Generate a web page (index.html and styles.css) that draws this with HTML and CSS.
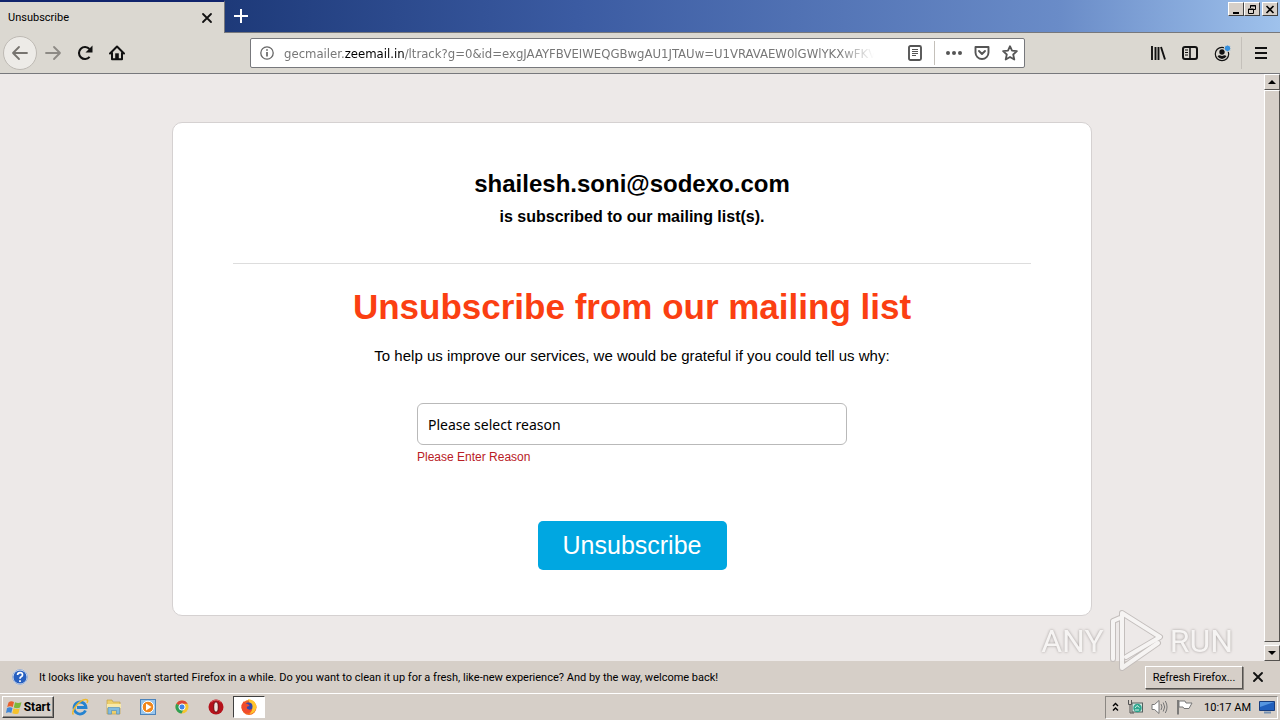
FILE: index.html
```html
<!DOCTYPE html>
<html lang="en">
<head>
    <meta charset="UTF-8">
    <meta name="viewport" content="width=device-width, initial-scale=1.0">
    <title>Unsubscribe</title>
    <link rel="stylesheet" href="styles.css">
</head>
<body>
    <header class="titlebar">
        <div class="tab">
            <span>Unsubscribe</span>
            <button class="icon-btn" aria-label="Close tab">
                <svg width="12" height="12" viewBox="0 0 12 12"><path d="M2 2l8 8M10 2l-8 8" stroke="#111" stroke-width="1.8" stroke-linecap="round"/></svg>
            </button>
        </div>
        <button class="icon-btn new-tab" aria-label="New tab">
            <svg width="14" height="14" viewBox="0 0 14 14"><path d="M7 0v14M0 7h14" stroke="#fff" stroke-width="2"/></svg>
        </button>
        <div class="window-buttons">
            <button aria-label="Minimize"><svg width="12" height="11" viewBox="0 0 12 11"><path d="M3 9h6" stroke="#000" stroke-width="2"/></svg></button>
            <button aria-label="Restore"><svg width="12" height="11" viewBox="0 0 12 11"><path d="M4.500 4V1.500h5v4H8M4 2h6M2.500 5h5v4.500h-5zM2 5.500h6" fill="none" stroke="#000"/></svg></button>
            <button class="close" aria-label="Close"><svg width="12" height="11" viewBox="0 0 12 11"><path d="M2.500 2l7 7M9.500 2l-7 7" stroke="#000" stroke-width="1.6"/></svg></button>
        </div>
    </header>

    <nav class="toolbar">
        <div class="nav-buttons">
            <button class="icon-btn back" aria-label="Back">
                <svg width="18" height="16" viewBox="0 0 18 16"><path d="M16 8H2M8 2L2 8l6 6" fill="none" stroke="#77746f" stroke-width="1.8" stroke-linecap="round" stroke-linejoin="round"/></svg>
            </button>
            <button class="icon-btn" aria-label="Forward">
                <svg width="18" height="16" viewBox="0 0 18 16"><path d="M2 8h14M10 2l6 6-6 6" fill="none" stroke="#8d8a85" stroke-width="1.8" stroke-linecap="round" stroke-linejoin="round"/></svg>
            </button>
            <button class="icon-btn" aria-label="Reload">
                <svg width="16" height="16" viewBox="0 0 16 16"><path d="M12.600 11.800A6 6 0 1 1 12.500 4" fill="none" stroke="#111" stroke-width="2.100"/><path d="M15.500 0.500v7h-7z" fill="#111"/></svg>
            </button>
            <button class="icon-btn" aria-label="Home">
                <svg width="16" height="16" viewBox="0 0 16 16"><path d="M1 8.500L8 1.500l7 7M3 8v6.200h10V8" fill="none" stroke="#111" stroke-width="2" stroke-linecap="round" stroke-linejoin="round"/><path d="M6.200 8.300h3.600v6H6.200z" fill="#111"/></svg>
            </button>
        </div>
        <div class="urlbar">
            <svg width="14" height="14" viewBox="0 0 14 14"><circle cx="7" cy="7" r="6.200" fill="none" stroke="#666" stroke-width="1.300"/><path d="M7 6v4.500M7 3.200v1.600" stroke="#666" stroke-width="1.700"/></svg>
            <div class="url">gecmailer.<b>zeemail.in</b>/ltrack?g=0&amp;id=exgJAAYFBVEIWEQGBwgAU1JTAUw=U1VRAVAEW0lGWlYKXwFKV</div>
            <button class="icon-btn" aria-label="Reader view">
                <svg width="14" height="16" viewBox="0 0 14 16"><rect x="1" y="1" width="12" height="14" rx="1.500" fill="none" stroke="#555" stroke-width="1.900"/><path d="M4 4.500h6M4 6.500h6M4 8.500h6M4 10.500h4" stroke="#555"/></svg>
            </button>
            <span class="separator"></span>
            <button class="icon-btn" aria-label="Page actions">
                <svg width="16" height="16" viewBox="0 0 16 16" fill="#555"><circle cx="2" cy="8" r="2"/><circle cx="8" cy="8" r="2"/><circle cx="14" cy="8" r="2"/></svg>
            </button>
            <button class="icon-btn" aria-label="Save to Pocket">
                <svg width="16" height="16" viewBox="0 0 16 16" fill="none" stroke="#555" stroke-width="1.900" stroke-linecap="round" stroke-linejoin="round"><path d="M1.500 2h13v5.500a6.500 6.500 0 0 1-13 0z"/><path d="M5 6l3 3 3-3"/></svg>
            </button>
            <button class="icon-btn" aria-label="Bookmark">
                <svg width="16" height="16" viewBox="0 0 16 16"><path d="M8 1.200l2 4.500 4.900.5-3.700 3.300 1.100 5L8 12l-4.300 2.500 1.100-5L1.100 6.200 6 5.700z" fill="none" stroke="#555" stroke-width="1.800" stroke-linejoin="round"/></svg>
            </button>
        </div>
        <div class="tools">
            <button class="icon-btn" aria-label="Library">
                <svg width="16" height="16" viewBox="0 0 16 16"><path d="M2 1v14M5.500 2v13M8.500 2v13M11 2l4 12.500" fill="none" stroke="#111" stroke-width="1.900"/></svg>
            </button>
            <button class="icon-btn" aria-label="Sidebars">
                <svg width="16" height="16" viewBox="0 0 16 16"><rect x="1" y="2" width="14" height="12" rx="2" fill="none" stroke="#111" stroke-width="2"/><path d="M8 2v12" stroke="#111" stroke-width="1.600"/><path d="M3 5h3M3 7.500h3M3 10h3" stroke="#111"/></svg>
            </button>
            <button class="icon-btn" aria-label="Account">
                <svg width="17" height="17" viewBox="0 0 17 17"><circle cx="8" cy="9" r="6.700" fill="none" stroke="#111" stroke-width="1.200"/><circle cx="8" cy="7" r="2.700" fill="#111"/><path d="M3.500 11.300q1.500-1.500 3-.7 1.500.8 3 0 1.500-.8 3 .7Q11 14 8 14t-4.500-2.700z" fill="#111"/><circle cx="13.500" cy="3.300" r="3.300" fill="#3590de" stroke="#dbd8d1"/></svg>
            </button>
            <span class="separator"></span>
            <button class="icon-btn" aria-label="Menu">
                <svg width="12" height="12" viewBox="0 0 12 12"><path d="M0 1h12M0 6h12M0 11h12" stroke="#111" stroke-width="2"/></svg>
            </button>
        </div>
    </nav>

    <div class="viewport">
        <main>
            <section class="card">
                <h2>shailesh.soni@sodexo.com</h2>
                <h3>is subscribed to our mailing list(s).</h3>
                <hr>
                <h1>Unsubscribe from our mailing list</h1>
                <form>
                    <label for="reason">To help us improve our services, we would be grateful if you could tell us why:</label>
                    <div class="field">
                        <select id="reason">
                            <option>Please select reason</option>
                        </select>
                        <p class="error">Please Enter Reason</p>
                    </div>
                    <button type="button" class="unsubscribe-btn">Unsubscribe</button>
                </form>
            </section>
        </main>
        <div class="scrollbar">
            <button aria-label="Scroll up"><svg width="8" height="4" viewBox="0 0 8 4"><path d="M4 0l4 4H0z"/></svg></button>
            <div class="thumb"></div>
            <button aria-label="Scroll down"><svg width="8" height="4" viewBox="0 0 8 4"><path d="M0 0h8L4 4z"/></svg></button>
        </div>
        <div class="watermark">
            <span>ANY</span>
            <svg width="56" height="64" viewBox="0 0 56 64" fill="none" stroke-linejoin="round" stroke-linecap="round">
                <g stroke="#c0bbb9" stroke-width="6"><path d="M4 50V12l7-3M13 47V4l38 24-34 20M13 47v12l36-25"/></g>
                <g stroke="#f8f6f5" stroke-width="4"><path d="M4 50V12l7-3M13 47V4l38 24-34 20M13 47v12l36-25"/></g>
            </svg>
            <span>RUN</span>
        </div>
    </div>

    <div class="notification">
        <svg width="16" height="16" viewBox="0 0 16 16"><circle cx="8" cy="8" r="7.300" fill="#2860c0" stroke="#e6eefa" stroke-width="1.400"/><circle cx="8" cy="8" r="7.500" fill="none" stroke="#6d87b4" stroke-width=".6"/><path d="M5.600 6q0-2.400 2.500-2.400T10.500 6q0 1.200-1.300 1.800Q8 8.400 8 9.800M8 11.200v1.700" fill="none" stroke="#fff" stroke-width="1.700"/></svg>
        <p>It looks like you haven't started Firefox in a while. Do you want to clean it up for a fresh, like-new experience? And by the way, welcome back!</p>
        <button class="refresh-btn"><span>R<u>e</u>fresh Firefox...</span></button>
        <button class="icon-btn" aria-label="Dismiss">
            <svg width="12" height="12" viewBox="0 0 12 12"><path d="M2 2l8 8M10 2l-8 8" stroke="#111" stroke-width="1.900" stroke-linecap="round"/></svg>
        </button>
    </div>

    <footer class="taskbar">
        <button class="start-btn">
            <svg width="16" height="15" viewBox="0 0 16 15"><path d="M2.500 2.500Q5 .5 8 2L6.800 7Q4 5.700 1.200 7z" fill="#e8602c"/><path d="M9 2.300q3 1.500 6.500 0L14 7.500q-3 1.300-6.200 0z" fill="#7db83a"/><path d="M1 8q3-1.300 5.500 0l-1.200 5Q3 11.500 0 13z" fill="#3f86d6"/><path d="M7.500 8.300q3 1.400 6.200.2l-1.300 5q-3 1.200-6.100-.2z" fill="#f6c22c"/></svg>
            Start
        </button>
        <div class="quick-launch">
            <button class="icon-btn" aria-label="Internet Explorer">
                <svg width="18" height="18" viewBox="0 0 18 18"><path d="M14.500 12.500A6 6 0 1 1 15 9.500H6" fill="none" stroke="#2583d0" stroke-width="2.800"/><path d="M2.500 16.500C-1 14 8 2 14.500 1.500c3-.2 2.300 2 1.500 3.500" fill="none" stroke="#edb92e" stroke-width="1.500"/></svg>
            </button>
            <button class="icon-btn" aria-label="Explorer">
                <svg width="18" height="18" viewBox="0 0 18 18"><path d="M2 4V2h5l1 2h7v12H2z" fill="#edcf6b" stroke="#c4a248" stroke-width=".7"/><path d="M2 6h14v4H2z" fill="#f8e9a9"/><path d="M3 16V9.500h11.500V16h-3v-3.500h-5V16z" fill="#82bce0" stroke="#5a93bc" stroke-width=".7"/></svg>
            </button>
            <button class="icon-btn" aria-label="Media Player">
                <svg width="18" height="18" viewBox="0 0 18 18"><rect x="1.500" y="1.500" width="15" height="15" fill="#9ac6ec" stroke="#4b83bb"/><circle cx="9" cy="9" r="5.800" fill="#f0871d" stroke="#fff"/><path d="M7 5.500l5.500 3.500L7 12.500z" fill="#fff"/></svg>
            </button>
            <button class="icon-btn" aria-label="Chrome">
                <svg width="18" height="18" viewBox="0 0 18 18"><circle cx="9" cy="9" r="6.500" fill="#f5c530"/><path d="M9 9L3.300 5.800A6.500 6.500 0 0 1 14.700 5.800H9z" fill="#dc4437"/><path d="M3.300 5.800A6.500 6.500 0 0 0 8.500 15.500L11 10.500 9 9z" fill="#2f9f56"/><circle cx="9" cy="9" r="3.100" fill="#4285e8" stroke="#fff"/></svg>
            </button>
            <button class="icon-btn" aria-label="Opera">
                <svg width="18" height="18" viewBox="0 0 18 18"><circle cx="9" cy="9" r="7.500" fill="#b5121b"/><path d="M4 4q5-4 10 0" fill="none" stroke="#dc6b6b"/><ellipse cx="9" cy="9" rx="2.300" ry="5.200" fill="#eee4dd" stroke="#690b10"/></svg>
            </button>
            <button class="task-active" aria-label="Firefox">
                <svg width="18" height="18" viewBox="0 0 18 18"><circle cx="9" cy="9.500" r="7.500" fill="#f26522"/><path d="M8 1q8 1 8.500 8-1 6-7 7 5-5 1-9z" fill="#ffc52e"/><circle cx="8.500" cy="8.500" r="4" fill="#3446ac"/><path d="M1.500 7L4 3l1.500 2.500Q9 6 9.500 8 6 8 7 10.500q2 2 5 .5-1.500 5-6.500 4Q1 13 1.500 7z" fill="#f04b2c"/></svg>
            </button>
        </div>
        <div class="tray">
            <svg width="7" height="10" viewBox="0 0 7 10"><path d="M1 4l2.500-2.500L6 4M1 8.500L3.500 6 6 8.500" fill="none" stroke="#000" stroke-width="1.400"/></svg>
            <svg width="16" height="16" viewBox="0 0 16 16"><rect x="5" y="4" width="10.500" height="9" fill="#cfe6e0" stroke="#56605e"/><circle cx="10.500" cy="9" r="4.200" fill="#2ba58d"/><path d="M8 9l2-2.500 2.500 2M8 11h4" fill="none" stroke="#d2f3e9"/><path d="M1.500 1v4.500h3V1M3 5.500V14h4" fill="none" stroke="#555"/></svg>
            <svg width="17" height="16" viewBox="0 0 17 16" fill="none" stroke="#777"><path d="M1 5.500h2.500L8 1.500v13l-4.500-4H1z" fill="#fff"/><path d="M10 5q2 3 0 6M12.200 3.500q3 4.500 0 9M14.300 2q3.500 6 0 12"/></svg>
            <svg width="17" height="16" viewBox="0 0 17 16"><path d="M2 1v14.500" stroke="#666" stroke-width="1.600"/><path d="M3 2h6l1 2h6l-3 5.500H8l-1-1.500H3z" fill="#fff" stroke="#777"/></svg>
            <time>10:17 AM</time>
            <svg width="16" height="14" viewBox="0 0 16 14"><path d="M.5 1.500h15v9H.5z" fill="#2160bd" stroke="#183d7d"/><path d="M1 2h14L1 7z" fill="#5696e0"/><path d="M5 12.500h7" stroke="#7791b1" stroke-width="2"/></svg>
        </div>
    </footer>
</body>
</html>
```
FILE: styles.css
```css
* {
    box-sizing: border-box;
}

body {
    margin: 0;
    min-height: 100vh;
    display: flex;
    flex-direction: column;
    font-family: "Liberation Sans", Arial, sans-serif;
    background-color: #d6cfc8;
    color: #000;
}

h1, h2, h3, p {
    margin: 0;
}

button {
    display: flex;
    align-items: center;
    justify-content: center;
    padding: 0;
    border: none;
    background: none;
    color: #000;
    font-family: inherit;
}

svg {
    display: block;
    flex: none;
}

.titlebar, .notification, .taskbar {
    font-family: Roboto, Tahoma, sans-serif;
    font-size: 11px;
}

.icon-btn {
    width: 18px;
    height: 18px;
    flex: none;
}

/* Title bar */
.titlebar {
    display: flex;
    height: 33px;
    border-bottom: 1px solid #77787c;
    background: linear-gradient(90deg, #1d3978 17%, #3b5ba2 45%, #6a8cc8 83%, #9fc2ec);
}

.tab {
    display: flex;
    align-items: center;
    justify-content: space-between;
    width: 225px;
    height: 33px;
    padding: 0 8px;
    border-top: 2px solid #10246c;
    border-right: 1px solid #77787c;
    background-color: #dbd8d1;
}

.new-tab {
    width: 32px;
    height: 32px;
}

.window-buttons {
    display: flex;
    margin: 2px 2px 0 auto;
}

.window-buttons button {
    width: 16px;
    height: 14px;
    background-color: #d6cfc8;
    border: 1px solid;
    border-color: #fff #404040 #404040 #fff;
}

.window-buttons .close {
    margin-left: 2px;
}

/* Toolbar */
.toolbar {
    display: flex;
    align-items: center;
    justify-content: space-between;
    height: 41px;
    background-color: #dbd8d1;
    border-bottom: 1px solid #77787c;
}

.nav-buttons {
    display: flex;
    align-items: center;
    gap: 14px;
    width: 250px;
    padding-left: 3px;
}

.nav-buttons .back {
    width: 34px;
    height: 34px;
    margin-right: -7px;
    border: 1px solid #bebab4;
    border-radius: 50%;
    background-color: #edebe7;
}

.urlbar {
    display: flex;
    align-items: center;
    gap: 10px;
    flex: 0 1 775px;
    min-width: 0;
    height: 30px;
    padding: 0 5px 0 9px;
    border: 1px solid #77787c;
    border-radius: 2px;
    background-color: #fff;
}

.url {
    flex: 1;
    overflow: hidden;
    margin-right: 22px;
    color: #777;
    font-family: "DejaVu Sans Condensed", Tahoma, sans-serif;
    font-size: 13px;
    white-space: nowrap;
    mask-image: linear-gradient(90deg, #000 94%, transparent);
}

.url b {
    color: #000;
    font-weight: normal;
}

.separator {
    width: 1px;
    height: 24px;
    background-color: #c4c0ba;
}

.tools {
    display: flex;
    align-items: center;
    justify-content: flex-end;
    gap: 14px;
    width: 255px;
    padding-right: 10px;
}

.tools .separator {
    height: 32px;
    margin: 0 -4px;
}

/* Page */
.viewport {
    position: relative;
    display: flex;
    flex: 1;
    background-color: #ede9e8;
}

main {
    flex: 1;
    padding: 48px 20px 45px;
}

.card {
    max-width: 920px;
    margin: 0 auto;
    padding: 46px 60px 45px;
    border: 1px solid #d5d1d1;
    border-radius: 10px;
    background-color: #fff;
    text-align: center;
}

.card h2 {
    font-size: 24px;
    line-height: 30px;
}

.card h3 {
    margin-top: 6px;
    font-size: 16px;
    line-height: 24px;
}

.card hr {
    height: 1px;
    margin: 34px 0 22px;
    border: none;
    background-color: #ddd;
}

.card h1 {
    color: #fb3f12;
    font-size: 35px;
    line-height: 42px;
}

.card label {
    display: block;
    margin-top: 18px;
    font-size: 15px;
    line-height: 20px;
}

.field {
    max-width: 430px;
    margin: 37px auto 56px;
    text-align: left;
}

.field select {
    display: block;
    appearance: none;
    width: 100%;
    height: 42px;
    padding: 0 10px;
    border: 1px solid #b9b9b9;
    border-radius: 6px;
    background-color: #fff;
    color: #000;
    font-family: "Noto Sans", Tahoma, sans-serif;
    font-size: 14px;
}

.error {
    margin-top: 4px;
    color: #b92025;
    font-size: 12px;
    line-height: 16px;
}

.unsubscribe-btn {
    width: 189px;
    height: 49px;
    margin: 0 auto;
    border-radius: 5px;
    background-color: #00a7e1;
    color: #fff;
    font-size: 25px;
}

.scrollbar {
    display: flex;
    flex-direction: column;
    width: 16px;
    background-color: #e9e6e2;
}

.scrollbar button, .thumb {
    border: 1px solid;
    border-color: #fff #55524f #55524f #fff;
    background-color: #d6cfc8;
}

.scrollbar button {
    height: 16px;
}

.thumb {
    flex: 1;
    margin-bottom: 3px;
}

.watermark {
    position: absolute;
    right: 47px;
    bottom: -12px;
    display: flex;
    align-items: center;
    gap: 5px;
    color: #f8f6f5;
    font-family: Roboto, sans-serif;
    font-size: 32px;
    text-shadow: 0 0 3px #96918f;
    opacity: 0.9;
    pointer-events: none;
}

/* Notification bar */
.notification {
    display: flex;
    align-items: center;
    height: 32px;
    padding: 0 13px 0 12px;
}

.notification p {
    margin: 0 auto 0 11px;
}

.refresh-btn {
    width: 98px;
    height: 23px;
    margin-right: 6px;
    border: 1px solid;
    border-color: #fff #55524f #55524f #fff;
    box-shadow: 1px 1px #8b8782;
    font-size: 11px;
}

/* Taskbar */
.taskbar {
    display: flex;
    align-items: center;
    height: 27px;
    padding: 0 2px;
    border-top: 1px solid #fff;
}

.start-btn {
    gap: 2px;
    width: 52px;
    height: 22px;
    border: 1px solid;
    border-color: #fff #404040 #404040 #fff;
    box-shadow: inset -1px -1px #8b8782;
    font-size: 12px;
    font-weight: bold;
}

.quick-launch {
    display: flex;
    align-items: center;
    gap: 16px;
    margin-left: 17px;
}

.task-active {
    width: 32px;
    height: 22px;
    margin-left: -8px;
    border: 1px solid;
    border-color: #404040 #fff #fff #404040;
    background-color: #fff;
}

.tray {
    display: flex;
    align-items: center;
    gap: 8px;
    height: 23px;
    margin-left: auto;
    padding: 0 2px 0 6px;
    border: 1px solid;
    border-color: #8b8782 #fff #fff #8b8782;
}

.tray time {
    margin-left: 3px;
}
```
